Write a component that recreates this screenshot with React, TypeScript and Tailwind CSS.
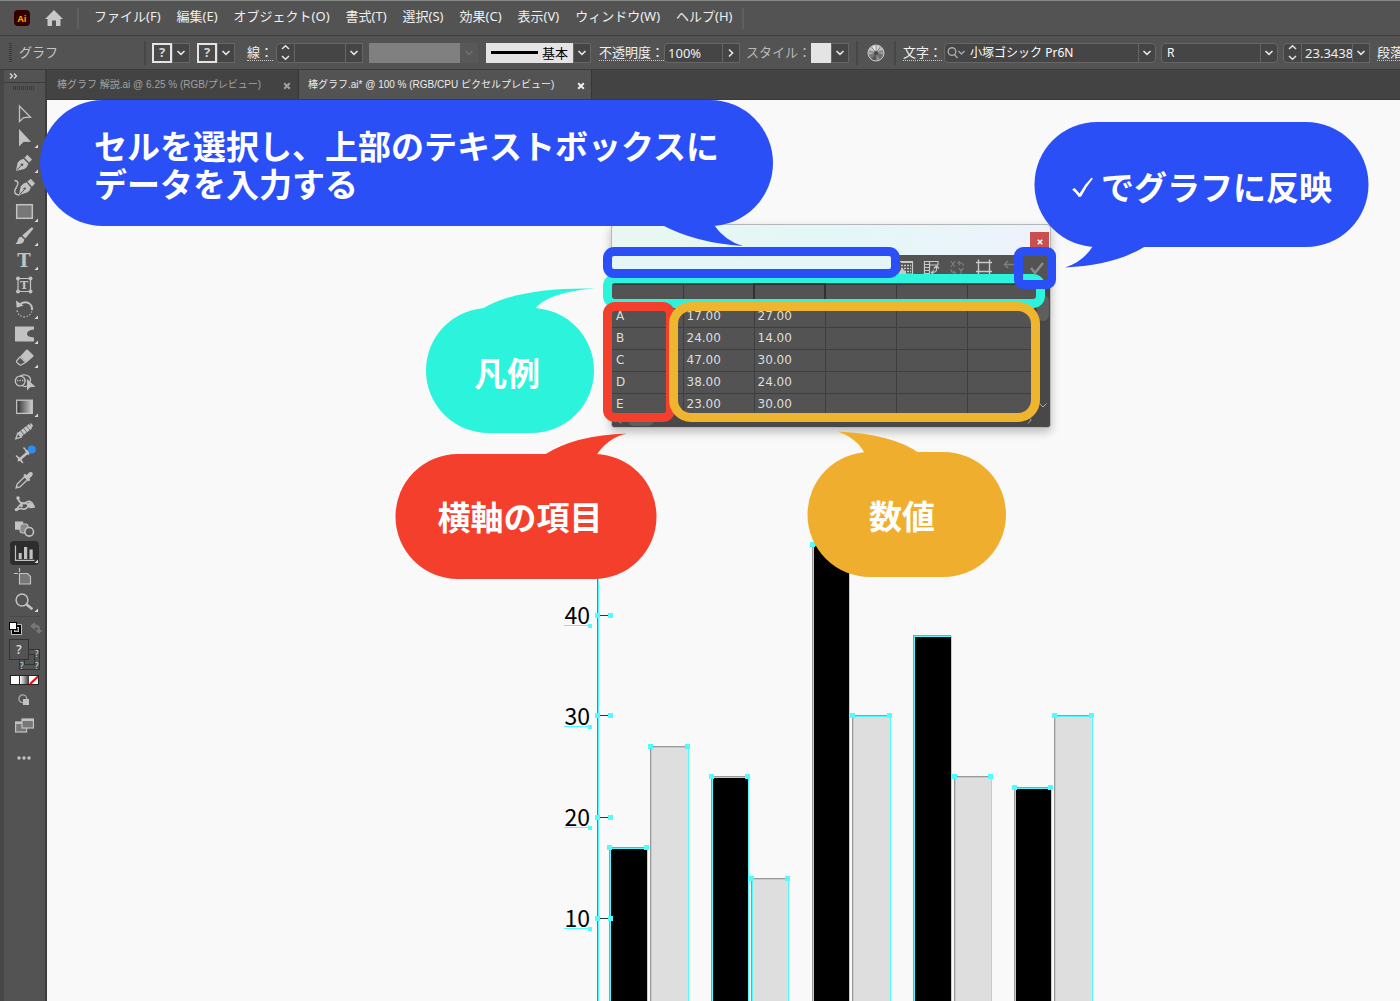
import type { ReactNode } from 'react'

const UI = "font-['Noto_Sans','Noto_Sans_CJK_JP',sans-serif]"
const JP = "font-['Noto_Sans_CJK_JP',sans-serif]"

/* ---------- small glyphs ---------- */

function Chevron({ dim = false }: { dim?: boolean }) {
  return (
    <svg width="10" height="6" viewBox="0 0 10 6" fill="none" stroke={dim ? '#6e6e6e' : '#e6e6e6'} strokeWidth="1.6">
      <path d="M1.5 1 L5 4.4 L8.5 1" />
    </svg>
  )
}

function ChevronBox({ label, dim = false }: { label: string; dim?: boolean }) {
  return (
    <button
      aria-label={label}
      className={
        dim
          ? 'flex h-5 w-[18px] items-center justify-center bg-[#585858]'
          : 'flex h-5 w-[18px] items-center justify-center border border-[#666] bg-[#454545]'
      }
    >
      <Chevron dim={dim} />
    </button>
  )
}

function Stepper({ label }: { label: string }) {
  return (
    <button
      aria-label={label}
      className="flex h-5 w-[19px] items-center justify-center rounded-l-sm border border-[#666] bg-[#454545]"
    >
      <svg width="9" height="17" viewBox="0 0 9 17" fill="none" stroke="#e6e6e6" strokeWidth="1.5">
        <path d="M1 5 L4.5 1.8 L8 5 M1 12 L4.5 15.2 L8 12" />
      </svg>
    </button>
  )
}

function PaintPicker({ label }: { label: string }) {
  return (
    <div className="flex">
      <button
        aria-label={label}
        className="flex h-5 w-5 items-center justify-center border-2 border-[#e4e4e4] bg-[#4a4a4a] font-['Noto_Sans'] text-[13px] font-bold leading-none text-[#d6d6d6]"
      >
        ?
      </button>
      <ChevronBox label={label + 'メニュー'} />
    </div>
  )
}

function Divider() {
  return <span className="h-6 w-[2px] shrink-0 bg-[#474747]" />
}

function FieldLabel({ children, htmlFor }: { children: ReactNode; htmlFor: string }) {
  return (
    <label htmlFor={htmlFor} className="whitespace-nowrap border-b border-dotted border-[#c8c8c8] leading-4 text-[#f0f0f0]">
      {children}
    </label>
  )
}

/* ---------- menu bar ---------- */

const MENUS = [
  'ファイル(F)',
  '編集(E)',
  'オブジェクト(O)',
  '書式(T)',
  '選択(S)',
  '効果(C)',
  '表示(V)',
  'ウィンドウ(W)',
  'ヘルプ(H)',
]

function MenuBar() {
  return (
    <header className="flex h-[35px] shrink-0 items-center border-b border-[#3b3b3b] bg-[#535353] pl-[14px]">
      <span className="flex h-4 w-4 items-center justify-center rounded-sm bg-[#330000] font-['Noto_Sans'] text-[9px] font-bold leading-none text-[#ff9a00]">
        Ai
      </span>
      <button aria-label="ホーム" className="ml-[14px]">
        <svg width="20" height="18" viewBox="0 0 20 18" fill="#c8c8c8">
          <path d="M10 1 L19 10 L16.5 10 L16.5 17 L12 17 L12 11.5 L8 11.5 L8 17 L3.5 17 L3.5 10 L1 10 Z" />
        </svg>
      </button>
      <span className="ml-[13px] h-[21px] w-[2px] bg-[#5f5f5f]" />
      <nav className="ml-[15px] flex gap-4 pb-1">
        {MENUS.map((m) => (
          <button key={m} className="whitespace-nowrap text-[13px] leading-5 text-[#efefef]">
            {m}
          </button>
        ))}
      </nav>
      <span className="ml-[10px] h-[21px] w-[2px] bg-[#5f5f5f]" />
    </header>
  )
}

/* ---------- control bar ---------- */

function ColorWheel() {
  const shades = ['#d8d8d8', '#b9b9b9', '#9a9a9a', '#6f6f6f', '#8b8b8b', '#555', '#7b7b7b', '#a8a8a8', '#c4c4c4', '#e2e2e2']
  return (
    <svg width="18" height="18" viewBox="-9 -9 18 18">
      {shades.map((c, i) => {
        const a = (i * Math.PI) / 5
        const b = ((i + 1) * Math.PI) / 5
        return (
          <path
            key={c}
            fill={c}
            stroke="#666"
            strokeWidth="0.5"
            d={`M0 0 L${8 * Math.sin(a)} ${-8 * Math.cos(a)} A8 8 0 0 1 ${8 * Math.sin(b)} ${-8 * Math.cos(b)} Z`}
          />
        )
      })}
      <circle r="8" fill="none" stroke="#c8c8c8" />
      <circle r="2" fill="#4a4a4a" />
    </svg>
  )
}

function ControlBar() {
  return (
    <section className="flex h-[34px] shrink-0 items-center overflow-hidden border-b border-[#3b3b3b] bg-[#535353] pl-[9px] text-[13px] text-[#e2e2e2] *:shrink-0">
      <span className="h-5 w-[3px] bg-[repeating-linear-gradient(#3a3a3a_0_1px,transparent_1px_2px)]" />
      <span className="ml-[7px] w-[125px] pb-[2px] leading-5 text-[#c6c6c6]">グラフ</span>
      <Divider />
      <div className="ml-[6px] flex gap-[7px]">
        <PaintPicker label="塗り" />
        <PaintPicker label="線の色" />
      </div>
      <div className="ml-[12px] flex items-center gap-[3px]">
        <FieldLabel htmlFor="stroke">線：</FieldLabel>
        <div className="flex">
          <Stepper label="線幅を増減" />
          <input id="stroke" className="h-5 w-[50px] border-y border-[#666] bg-[#454545] px-1" />
          <ChevronBox label="線幅" />
        </div>
      </div>
      <div className="ml-[6px] flex">
        <span className="h-5 w-[91px] bg-[#808080]" />
        <ChevronBox label="可変線幅プロファイル" dim />
      </div>
      <div className="ml-[8px] flex">
        <button className="flex h-5 w-[87px] items-center justify-between bg-[#e4e4e4] px-[5px] leading-5 text-black">
          <span className="h-[3px] w-[47px] bg-black" />
          基本
        </button>
        <ChevronBox label="ブラシ定義" />
      </div>
      <div className="ml-[8px] flex items-center">
        <FieldLabel htmlFor="opacity">不透明度：</FieldLabel>
        <input
          id="opacity"
          defaultValue="100%"
          className="h-5 w-[58px] rounded-l-sm border border-r-0 border-[#666] bg-[#454545] px-[3px] text-[#f0f0f0]"
        />
        <button aria-label="不透明度スライダー" className="flex h-5 w-[18px] items-center justify-center border border-[#666] bg-[#454545]">
          <svg width="6" height="10" viewBox="0 0 6 10" fill="none" stroke="#e6e6e6" strokeWidth="1.6">
            <path d="M1 1.5 L4.6 5 L1 8.5" />
          </svg>
        </button>
      </div>
      <div className="ml-[6px] flex items-center">
        <span className="pb-[2px] leading-5 text-[#b8b8b8]">スタイル：</span>
        <button aria-label="グラフィックスタイル" className="h-5 w-[20px] bg-[#e4e4e4]" />
        <ChevronBox label="スタイルメニュー" />
      </div>
      <div className="ml-[7px] flex items-center gap-[9px]">
        <Divider />
        <button aria-label="オブジェクトを再配色">
          <ColorWheel />
        </button>
        <Divider />
      </div>
      <div className="ml-[7px] flex items-center gap-[2px]">
        <FieldLabel htmlFor="font">文字：</FieldLabel>
        <div className="flex h-5 items-center rounded-sm border border-[#666] bg-[#454545]">
          <svg className="ml-[2px]" width="18" height="14" viewBox="0 0 18 14" fill="none" stroke="#a8a8a8" strokeWidth="1.4">
            <circle cx="5" cy="5.5" r="3.8" />
            <path d="M7.5 8.5 L10.5 12 M11.5 5 L14.5 8 L17.5 5" />
          </svg>
          <select id="font" className="ml-[5px] h-[18px] w-[168px] appearance-none bg-transparent text-[12px] leading-[18px] text-white">
            <option>小塚ゴシック Pr6N</option>
          </select>
          <span className="flex h-[18px] w-[17px] items-center justify-center border-l border-[#666]">
            <Chevron />
          </span>
        </div>
      </div>
      <div className="ml-[5px] flex h-5 items-center rounded-sm border border-[#666] bg-[#454545] pl-[5px]">
        <select aria-label="フォントスタイル" className="h-[18px] w-[93px] appearance-none bg-transparent text-[12px] leading-[18px] text-white">
          <option>R</option>
        </select>
        <span className="flex h-[18px] w-[17px] items-center justify-center border-l border-[#666]">
          <Chevron />
        </span>
      </div>
      <div className="ml-[5px] flex">
        <Stepper label="フォントサイズを増減" />
        <input
          aria-label="フォントサイズ"
          defaultValue="23.3438"
          className="h-5 w-[50px] border-y border-[#666] bg-[#454545] pl-[3px] text-[#f0f0f0]"
        />
        <ChevronBox label="フォントサイズ" />
      </div>
      <button className="ml-[7px] whitespace-nowrap border-b border-dotted border-[#c8c8c8] leading-4 text-[#f0f0f0]">段落：</button>
    </section>
  )
}

/* ---------- document tabs ---------- */

function Tab({ title, active = false }: { title: string; active?: boolean }) {
  return (
    <div
      className={
        active
          ? 'flex h-[29px] w-[293px] items-center justify-between border-r border-[#363636] bg-[#535353] pl-[9px] pr-[6px] text-[#ededed]'
          : 'flex h-[29px] w-[252px] items-center justify-between border-r border-[#363636] bg-[#434343] pl-[10px] pr-[7px] text-[#a2a2a2]'
      }
    >
      <button className="whitespace-nowrap font-['Liberation_Sans','Noto_Sans_CJK_JP',sans-serif] text-[10px] leading-4">
        {title}
      </button>
      <button aria-label="閉じる" className="pt-[2px]">
        <svg width="8" height="8" viewBox="0 0 8 8" stroke="currentColor" strokeWidth="2">
          <path d="M1.2 1.2 L6.8 6.8 M6.8 1.2 L1.2 6.8" />
        </svg>
      </button>
    </div>
  )
}

/* ---------- toolbox ---------- */

const G = '#c2c2c2'

type Tool = { name: string; more?: boolean; active?: boolean; art: ReactNode }

const TOOLS: Tool[] = [
  { name: '選択', art: <path d="M9.5 4 L9.5 19.5 L13.7 15.6 L20.5 15.2 Z" fill="none" stroke={G} strokeWidth="1.3" /> },
  { name: 'ダイレクト選択', more: true, art: <path d="M9 3 L9 20.5 L13.5 16 L21 15.7 Z" /> },
  {
    name: 'ペン',
    more: true,
    art: (
      <>
        <path d="M5.8 20 L7.7 11.5 Q10 8.5 13.5 7.8 L18.4 12.8 Q17.5 16.5 14.3 18 Z" />
        <path d="M14.5 6.7 L17.3 3.8 L22 8.4 L19.2 11.6 Z" />
        <path d="M6.5 19.3 L11.5 14.3" stroke="#535353" />
        <circle cx="12" cy="13.8" r="1.3" fill="#535353" />
      </>
    ),
  },
  {
    name: '曲線',
    art: (
      <>
        <path d="M9 20.3 L10.6 11.4 Q13 8 16.5 7.3 L20.8 12.6 Q20 16.3 17 17.6 Z" />
        <path d="M17.4 6.4 L20.8 3.8 L25 8.4 L22 11.8 Z" />
        <path d="M4.5 5.5 C9 6 8.5 9 6.3 12.5 C3.5 16.5 4.5 20 9.5 20" fill="none" stroke={G} strokeWidth="1.4" />
        <path d="M9.8 19.5 L14.2 14.8" stroke="#535353" />
        <circle cx="14.6" cy="13.6" r="1.2" fill="#535353" />
      </>
    ),
  },
  { name: '長方形', more: true, art: <rect x="6.7" y="4.7" width="15.6" height="13.6" fill="#777" stroke={G} strokeWidth="1.5" /> },
  {
    name: 'ブラシ',
    more: true,
    art: (
      <>
        <path d="M5.5 19.8 Q7.6 18.6 7.8 16 Q8.5 12.8 11.4 12.7 L14.4 15.5 Q14 19 10.5 19.8 Q8 20.4 5.5 19.8 Z" />
        <path d="M12.2 11.6 L21.3 3.6 Q23.5 2.8 23.2 5 L15.4 14.6 Z" />
      </>
    ),
  },
  {
    name: '文字',
    more: true,
    art: (
      <text x="14" y="19" textAnchor="middle" fontFamily="DejaVu Serif" fontWeight="bold" fontSize="18">
        T
      </text>
    ),
  },
  {
    name: '文字タッチ',
    art: (
      <>
        <path d="M8 5.5 H20.5 V18.5 H8 Z" fill="none" stroke={G} strokeWidth="1.2" />
        <circle cx="8" cy="5.5" r="2" />
        <circle cx="20.5" cy="5.5" r="2" />
        <circle cx="8" cy="18.5" r="2" />
        <circle cx="20.5" cy="18.5" r="2" />
        <text x="14.2" y="16.2" textAnchor="middle" fontFamily="DejaVu Serif" fontWeight="bold" fontSize="11">
          T
        </text>
      </>
    ),
  },
  {
    name: '回転',
    more: true,
    art: (
      <>
        <path d="M10 7.5 Q14 4 18.5 6 Q22.5 8.3 22 13" fill="none" stroke={G} strokeWidth="2" />
        <path d="M6 3.5 L6.7 10.8 L13.5 8.5 Z" />
        <path d="M7 13.5 Q8.5 19.5 14 20 Q19.5 19.8 21.8 14.5" fill="none" stroke={G} strokeWidth="1.3" strokeDasharray="1.3 1.9" />
      </>
    ),
  },
  { name: '線幅', more: true, art: <path d="M5 4.5 H24 V7.5 Q17 8 17 12 Q17 15 24 15.5 V19.5 H5 Z" /> },
  {
    name: '消しゴム',
    more: true,
    art: (
      <>
        <path d="M10.3 10.3 L16 4 Q17 3 18 4 L23.4 9.3 Q24 10.2 23 11 L16.5 16.6 Z" />
        <path d="M10 11 L6.6 14.8 Q6.2 15.7 7 16.4 L9.6 18.8 Q10.6 19.6 11.5 18.8 L15.6 16.4 Z" fill="none" stroke={G} strokeWidth="1.3" />
      </>
    ),
  },
  {
    name: 'シェイプ形成',
    art: (
      <>
        <circle cx="10.2" cy="11" r="4.9" fill="none" stroke={G} strokeWidth="1.3" />
        <path d="M10 6.2 Q14.5 3.5 18.8 6.3 Q21.5 9 20 12" fill="none" stroke={G} strokeWidth="1.3" />
        <path d="M12 15.5 Q15 17.3 17 16" fill="none" stroke={G} strokeWidth="1.3" />
        <path d="M7 10.5 H17" stroke={G} strokeWidth="1.3" strokeDasharray="1.3 1.2" />
        <path d="M17 9 L17 20.6 L20.2 17.2 L25.5 16.8 Z" />
      </>
    ),
  },
  {
    name: 'グラデーション',
    more: true,
    art: (
      <>
        <defs>
          <linearGradient id="toolFade">
            <stop offset="0" stopColor="#2e2e2e" />
            <stop offset="1" stopColor="#cfcfcf" />
          </linearGradient>
        </defs>
        <rect x="6.7" y="5.2" width="15.6" height="13.2" fill="url(#toolFade)" stroke={G} strokeWidth="1.3" />
      </>
    ),
  },
  {
    name: '鉛筆',
    art: (
      <>
        <path d="M9.5 15.8 L20.5 7.2" stroke={G} strokeWidth="5.4" strokeDasharray="3.2 0.6" />
        <path d="M20 4.2 Q23 4.5 22.8 7.5 L20.5 9 Z" />
        <path d="M5.8 19.8 L7.8 14.2 L11.2 18.2 Z" fill="none" stroke={G} strokeWidth="1.3" />
      </>
    ),
  },
  {
    name: '寸法',
    art: (
      <>
        <path d="M9 17 L20 7.5" stroke={G} strokeWidth="2.4" />
        <path d="M6 12.5 L13 20 M13.5 4.5 L17.5 9" stroke={G} strokeWidth="1.4" />
        <path d="M7.5 18.5 L8.5 13.5 L12.6 17.4 Z M18.5 12.5 L15 8 L21 6.5 Z" />
        <circle cx="21.8" cy="6.5" r="4" fill="#2f8df0" />
      </>
    ),
  },
  {
    name: 'スポイト',
    art: (
      <>
        <path d="M6.2 19.8 L7.2 16 L14.5 8.8 L17.6 11.6 L10 18.9 Z" fill="none" stroke={G} strokeWidth="1.4" />
        <path d="M13.3 7.2 L15 5.8 L16.5 7 L19.5 4.3 Q22 3.5 22.6 5 Q23.3 6.6 21.8 8.2 L19.4 10.6 L20.3 12 L18.6 13.5 Z" />
      </>
    ),
  },
  {
    name: 'パペットワープ',
    art: (
      <>
        <path d="M8 6.5 Q9.5 12 14.5 11.5 Q19 7.5 22 11 Q23.5 14 24.5 15.5" fill="none" stroke={G} strokeWidth="1.8" />
        <path d="M6.6 17.5 Q9.5 12.5 13 11 Q18.5 11.5 18 14.5 Q15.5 18.5 11 16.5 Z" fill="none" stroke={G} strokeWidth="1.6" />
        <path d="M17 14.5 Q20 17.5 24.5 15.5 L21 11 Q18.5 9.5 17 12 Z" />
        <circle cx="8" cy="6" r="1.8" />
        <circle cx="6.4" cy="17.6" r="1.7" />
        <circle cx="11.5" cy="14" r="1.4" />
      </>
    ),
  },
  {
    name: 'ブレンド',
    art: (
      <>
        <rect x="5" y="4.5" width="8.2" height="8.2" />
        <rect x="10" y="7" width="8" height="9" rx="2.5" fill="#8a8a8a" stroke={G} strokeWidth="1.1" />
        <circle cx="19.2" cy="14.8" r="4.3" fill="#535353" stroke={G} strokeWidth="1.6" />
      </>
    ),
  },
  {
    name: '棒グラフ',
    more: true,
    active: true,
    art: (
      <>
        <path d="M5.5 4.5 V19.3 H24.5" fill="none" stroke={G} strokeWidth="1.2" />
        <path d="M8.7 12 h3 v6 h-3 Z M14 6 h3.2 v12 h-3.2 Z M19.5 8.5 h3.2 v9.5 h-3.2 Z" />
      </>
    ),
  },
  {
    name: 'アートボード',
    art: (
      <>
        <path d="M9.5 8.5 H17.5 L20.5 11.5 V19 H9.5 Z" fill="#777" stroke={G} strokeWidth="1.2" />
        <path d="M4 8.5 H8 M9.5 3 V7 M11 8.5 H13" stroke={G} strokeWidth="1.2" />
      </>
    ),
  },
  {
    name: 'ズーム',
    more: true,
    art: (
      <>
        <circle cx="12" cy="10" r="5.9" fill="none" stroke={G} strokeWidth="1.5" />
        <path d="M16.3 14.2 L22.4 19.2" stroke={G} strokeWidth="2.6" />
      </>
    ),
  },
]

function Toolbox() {
  return (
    <aside className="flex w-[47px] shrink-0 flex-col border-l-4 border-r-2 border-[#3d3d3d] border-l-[#474747] bg-[#535353]">
      <button aria-label="パネルを展開" className="flex h-[13px] items-center border-b border-[#3b3b3b] pl-[5px]">
        <svg width="9" height="6" viewBox="0 0 9 6" fill="none" stroke="#d8d8d8" strokeWidth="1.3">
          <path d="M1 0.5 L3.5 3 L1 5.5 M5 0.5 L7.5 3 L5 5.5" />
        </svg>
      </button>
      <span className="ml-[9px] mt-[3px] h-1 w-[22px] bg-[repeating-linear-gradient(90deg,#3a3a3a_0_1px,transparent_1px_2px)]" />
      <div className="mt-[12px] flex h-[512px] flex-col items-start justify-between pl-[6px]">
        {TOOLS.map((t) => (
          <button key={t.name} aria-label={t.name} className={t.active ? 'h-6 rounded-sm bg-[#2d2d2d]' : 'h-6 rounded-sm'}>
            <svg width="29" height="24" viewBox="0 0 29 24" fill={G}>
              {t.art}
              {t.more && <path d="M28 18.5 V22 H24.5 Z" fill="#dcdcdc" />}
            </svg>
          </button>
        ))}
      </div>
      <div className="ml-[5px] mt-[2px] w-[31px] border-t border-[#484848]" />
      <div className="ml-[4px] mt-[4px] flex justify-between pr-[2px]">
        <button aria-label="初期設定の塗りと線">
          <svg width="14" height="14" viewBox="0 0 14 14">
            <path d="M5 5 H12 V12 H5 Z" fill="none" stroke="#ddd" strokeWidth="3.6" />
            <path d="M5 5 H12 V12 H5 Z" fill="none" stroke="#000" strokeWidth="2" />
            <rect x="1.5" y="1.5" width="7" height="7" fill="#fff" stroke="#000" />
          </svg>
        </button>
        <button aria-label="塗りと線を入れ替え">
          <svg width="14" height="14" viewBox="0 0 14 14" fill="#777">
            <path d="M1 5 L6 1 V3.5 Q11.5 3.5 11 9 H13.5 L10 13 L6.5 9 H9 Q9 6 6 6.3 V9 Z" />
          </svg>
        </button>
      </div>
      <button aria-label="塗りと線" className="ml-[5px] mt-[4px] w-[31px]">
        <svg width="31" height="32" viewBox="0 0 31 32" fontFamily="Noto Sans" fill="#cfe3ee">
          <rect x="10.5" y="10.5" width="20" height="20" fill="#535353" stroke="#333" />
          <rect x="15.5" y="15.5" width="10" height="10" fill="#535353" stroke="#333" />
          <text x="26" y="18" fontSize="8">
            ?
          </text>
          <text x="11" y="30" fontSize="8">
            ?
          </text>
          <text x="26" y="30" fontSize="8">
            ?
          </text>
          <rect x="0.5" y="0.5" width="19" height="20" fill="#535353" stroke="#333" />
          <text x="10" y="15" fontSize="12" fontWeight="500" textAnchor="middle" fill="#e6e6e6">
            ?
          </text>
        </svg>
      </button>
      <button aria-label="カラーモード" className="ml-[6px] mt-[4px] w-[29px]">
        <svg width="29" height="10" viewBox="0 0 29 10">
          <defs>
            <linearGradient id="modeFade">
              <stop offset="0" stopColor="#fff" />
              <stop offset="1" stopColor="#333" />
            </linearGradient>
          </defs>
          <rect width="29" height="10" fill="#222" />
          <rect x="1" y="1" width="8" height="8" fill="#fff" />
          <rect x="10" y="1" width="9" height="8" fill="url(#modeFade)" />
          <rect x="19" y="1" width="9" height="8" fill="#fff" />
          <path d="M20 9 L28 1.5" stroke="#f00" strokeWidth="2" />
        </svg>
      </button>
      <button aria-label="描画モード" className="ml-[14px] mt-[9px] w-[12px]">
        <svg width="12" height="12" viewBox="0 0 12 12">
          <circle cx="4.8" cy="4.8" r="3.9" fill="none" stroke="#aaa" strokeWidth="1.3" />
          <rect x="5" y="5" width="6" height="6" fill="#c2c2c2" />
        </svg>
      </button>
      <button aria-label="スクリーンモード" className="ml-[11px] mt-[12px] w-[19px]">
        <svg width="19" height="15" viewBox="0 0 19 15" fill="#777" stroke="#c2c2c2" strokeWidth="1.2">
          <rect x="0.6" y="4" width="11" height="10" />
          <path d="M1 5 H11" strokeWidth="2" />
          <rect x="7" y="1" width="11.4" height="9" />
          <path d="M7 2 H18" strokeWidth="2" />
        </svg>
      </button>
      <button aria-label="ツールバーを編集" className="ml-[12px] mt-[23px] w-[16px]">
        <svg width="16" height="4" viewBox="0 0 16 4" fill="#c2c2c2">
          <circle cx="3" cy="2" r="1.7" />
          <circle cx="8" cy="2" r="1.7" />
          <circle cx="13" cy="2" r="1.7" />
        </svg>
      </button>
    </aside>
  )
}

/* ---------- bar chart on the artboard ---------- */

const CYAN = '#4ffcff'
const BARS = [
  { x: 563, y: 748, w: 37, dark: true },
  { x: 604, y: 647, w: 37 },
  { x: 665, y: 677, w: 36, dark: true },
  { x: 705, y: 779, w: 36 },
  { x: 766, y: 445, w: 36, dark: true },
  { x: 806, y: 616, w: 37 },
  { x: 867, y: 536, w: 37, dark: true, bare: true },
  { x: 908, y: 677, w: 36 },
  { x: 968, y: 688, w: 36, dark: true },
  { x: 1008, y: 616, w: 37 },
]
const TICKS = [
  { v: '40', y: 515, base: 524 },
  { v: '30', y: 615, base: 625 },
  { v: '20', y: 717, base: 726 },
  { v: '10', y: 818, base: 827 },
]

function Chart() {
  return (
    <svg className="absolute inset-0 h-full w-full" shapeRendering="crispEdges">
      <rect x="550" y="460" width="1" height="441" fill="#777" />
      <rect x="551" y="460" width="1" height="441" fill={CYAN} />
      {BARS.map((b) => (
        <g key={b.x}>
          <rect x={b.x - 1} y={b.y - 1} width={b.w + 1} height="900" fill="#999" />
          <rect x={b.x} y={b.y} width={b.w} height="900" fill={b.dark ? '#000' : '#dedede'} />
          <rect x={b.x} y={b.y} width={b.w} height="1" fill={CYAN} />
          <rect x={b.x} y={b.y} width="1" height="900" fill={CYAN} />
          <rect x={b.x + b.w} y={b.y} width="1" height="900" fill={CYAN} />
          {!b.bare && (
            <>
              <rect x={b.x - 3} y={b.y - 3} width="5" height="5" fill={CYAN} />
              <rect x={b.x + b.w - 3} y={b.y - 3} width="5" height="5" fill={CYAN} />
            </>
          )}
        </g>
      ))}
      {TICKS.map((t) => (
        <g key={t.v}>
          <rect x="550" y={t.y} width="14" height="1" fill="#333" />
          <rect x="548" y={t.y - 2} width="5" height="5" fill={CYAN} />
          <rect x="561" y={t.y - 2} width="5" height="5" fill={CYAN} />
          <text x="543" y={t.base} textAnchor="end" fontFamily="Noto Sans CJK JP" fontSize="23">
            {t.v}
          </text>
          <rect x="517" y={t.base + 1} width="28" height="1" fill={CYAN} />
          <rect x="541" y={t.base} width="4" height="4" fill={CYAN} />
        </g>
      ))}
    </svg>
  )
}

/* ---------- graph data window ---------- */

const ROWS = [
  ['A', '17.00', '27.00'],
  ['B', '24.00', '14.00'],
  ['C', '47.00', '30.00'],
  ['D', '38.00', '24.00'],
  ['E', '23.00', '30.00'],
]

function DataWindow() {
  return (
    <div className="absolute left-[564px] top-[124px] flex w-[440px] flex-col overflow-hidden rounded-sm border border-[#b4b8b8] bg-[#535353] shadow-[0_4px_10px_rgba(0,0,0,0.25)]">
      <div className="flex h-[30px] items-end justify-end bg-linear-to-r from-[#e9f7f0] via-[#e3f7f8] to-[#eff2fb] pr-[1px]">
        <button aria-label="閉じる" className="flex h-[23px] w-[19px] items-center justify-center bg-[#c94f50] pb-1 text-white">
          <svg width="6" height="6" viewBox="0 0 6 6" stroke="currentColor" strokeWidth="1.5">
            <path d="M0.8 0.8 L5.2 5.2 M5.2 0.8 L0.8 5.2" />
          </svg>
        </button>
      </div>
      <div className="flex h-[28px] items-start">
        <input aria-label="セルの値" className="h-[18px] w-[282px] bg-[#e4f7f6] px-1 text-[12px] text-black" />
        <svg className="ml-[3px]" width="150" height="24" viewBox="0 0 150 24" fill="none" stroke="#c8c8c8" strokeWidth="1.2">
          <path d="M3 6.5 H15.5 V19 H6" />
          <path d="M4 7 H15" strokeWidth="2" />
          <path d="M4 10.5 H14 M4 13.5 H14 M7 16.5 H14" strokeWidth="1.6" strokeDasharray="2 1" />
          <path d="M1 19 L5 13 L9 17 V19 Z" fill="#c8c8c8" stroke="none" />
          <path d="M27.5 6.5 H32.5 V18.5 H27.5 Z M32.5 6.5 H41 V10 H32.5" />
          <path d="M28 9.5 H32 M28 12.5 H32 M28 15.5 H32" />
          <path d="M39.5 11.5 V15 Q39 17.5 35 17.5 M36.8 13.5 L39.5 10.8 L42 13.5 M37 15.2 L34.5 17.5 L37 20" />
          <g stroke="#7c7c7c">
            <path d="M54 6 L58 12 M58 6 L54 12 M62 13 L64 16 L66.5 13 M64 16 V19 M54 14 Q54 18 58 18 M61 8 Q66 7 66.5 11" />
            <path d="M56.5 16 L58.5 18 L56.5 20 M63 6 L61 8 L63 10" />
          </g>
          <path d="M81.5 4.5 V19 M92.5 4.5 V19 M79 7.5 H95 M79 16.5 H95" strokeWidth="1.4" />
          <path d="M117 9.5 H108 M111 6 L107.5 9.5 L111 13" stroke="#7c7c7c" strokeWidth="1.6" />
          <path d="M134 13 L138 18 L146 8" stroke="#8a8a8a" strokeWidth="2.6" />
        </svg>
      </div>
      <div className="flex h-[130px] overflow-hidden">
        <table className="w-[424px] shrink-0 table-fixed border-collapse self-start font-['DejaVu_Sans'] text-[12px] leading-4 text-[#dedede]">
          <thead>
            <tr className="h-[21px] border-y border-[#3a3a3a]">
              <th className="w-[71px] border-r border-[#3a3a3a]" />
              <th className="w-[71px]" />
              <th className="w-[71px] border-2 border-[#303030]" />
              <th className="w-[71px] border-r border-[#3a3a3a]" />
              <th className="w-[71px] border-r border-[#3a3a3a]" />
              <th />
            </tr>
          </thead>
          <tbody>
            {ROWS.map((r) => (
              <tr key={r[0]} className="h-[22px] border-b border-[#3e3e3e]">
                {[0, 1, 2, 3, 4, 5].map((c) => (
                  <td key={c} className={c === 0 ? 'border-r border-[#3e3e3e] pl-1' : 'border-r border-[#3e3e3e] pl-[3px]'}>
                    {r[c] ?? ''}
                  </td>
                ))}
              </tr>
            ))}
          </tbody>
        </table>
        <div className="flex flex-1 flex-col items-center justify-between bg-[#484848] pb-[5px] pt-[12px]">
          <span className="h-[26px] w-[12px] rounded-full bg-[#5e5e5e]" />
          <svg width="8" height="5" viewBox="0 0 8 5" fill="none" stroke="#b0b0b0">
            <path d="M0.5 0.5 L4 4 L7.5 0.5" />
          </svg>
        </div>
      </div>
      <div className="flex h-[14px] items-center justify-between bg-[#484848] pl-[5px] pr-[18px]">
        <div className="flex items-center gap-[6px]">
          <svg width="5" height="8" viewBox="0 0 5 8" fill="none" stroke="#b0b0b0">
            <path d="M4 0.5 L0.8 4 L4 7.5" />
          </svg>
          <span className="h-[12px] w-[26px] rounded-full bg-[#5e5e5e]" />
        </div>
        <svg width="5" height="8" viewBox="0 0 5 8" fill="none" stroke="#b0b0b0">
          <path d="M1 0.5 L4.2 4 L1 7.5" />
        </svg>
      </div>
    </div>
  )
}

/* ---------- callouts ---------- */

function Annotations() {
  const text = 'absolute flex items-center justify-center whitespace-nowrap font-bold text-white'
  return (
    <div className={JP}>
      <span className="absolute left-[556px] top-[174px] h-[34px] w-[442px] rounded-[12px] border-[9px] border-[#2bf3dc]" />
      <span className="absolute left-[556px] top-[147px] h-[31px] w-[297px] rounded-[11px] border-[9px] border-[#2b4ff6]" />
      <span className="absolute left-[967px] top-[147px] h-[42px] w-[42px] rounded-[9px] border-[9px] border-[#2b4ff6]" />
      <span className="absolute left-[556px] top-[202px] h-[120px] w-[72px] rounded-[12px] border-[9px] border-[#f43f2c]" />
      <span className="absolute left-[622px] top-[202px] h-[120px] w-[371px] rounded-[22px] border-[9px] border-[#f0b52e]" />

      <svg className="absolute left-[-7px] top-0 h-[147px] w-[733px]" viewBox="0 0 733 147" fill="#2b4ff6">
        <rect y="0" width="733" height="126" rx="63" />
        <path d="M622 125 Q656 143 703 146 Q685 141 674 125 Z" />
      </svg>
      <p className={text + ' left-[47px] top-[26px] h-[76px] text-[33px] leading-[38px]'}>
        セルを選択し、上部のテキストボックスに
        <br />
        データを入力する
      </p>

      <svg className="absolute left-[987px] top-[22px] h-[147px] w-[335px]" viewBox="0 0 335 147" fill="#2b4ff6">
        <rect x="0.5" width="334" height="125" rx="62.5" />
        <path d="M59 124 Q49 140 31 145.5 Q82 143 112 124 Z" />
      </svg>
      <p className={text + ' left-[987px] top-[67px] h-[38px] w-[335px] text-[33px] leading-[38px]'}>
        <svg className="mr-[7px] mt-[2px]" width="23" height="21" viewBox="0 0 23 21" fill="#fff">
          <path d="M1 12.6 L3.6 11 L8.6 16.6 Q13.5 7.5 20.4 0.8 L22 1.4 Q15 9.5 10.2 19.6 L7.8 20 Q5 15.8 1 12.6 Z" />
        </svg>
        でグラフに反映
      </p>

      <svg className="absolute left-[379px] top-[188px] h-[146px] w-[170px]" viewBox="0 0 170 146" fill="#2bf3dc">
        <rect y="20" width="168" height="125" rx="62.5" />
        <path d="M56 21 Q92 -1 169 0.5 Q121 4 108 22 Z" />
      </svg>
      <p className={text + ' left-[379px] top-[253px] h-[38px] w-[162px] text-[33px] leading-[38px]'}>凡例</p>

      <svg className="absolute left-[348px] top-[333px] h-[147px] w-[262px]" viewBox="0 0 262 147" fill="#f43f2c">
        <rect x="0.5" y="21" width="261" height="125" rx="62.5" />
        <path d="M149 22 Q180 2 232 0.5 Q212 5 201 23 Z" />
      </svg>
      <p className={text + ' left-[348px] top-[397px] h-[38px] w-[250px] text-[33px] leading-[38px]'}>横軸の項目</p>

      <svg className="absolute left-[760px] top-[331px] h-[147px] w-[200px]" viewBox="0 0 200 147" fill="#f0ae2e">
        <rect x="0.5" y="21" width="198.5" height="125" rx="62.5" />
        <path d="M31 0.5 Q85 3 112 22 L58 23 Q51 8 31 0.5 Z" />
      </svg>
      <p className={text + ' left-[760px] top-[396px] h-[38px] w-[190px] text-[33px] leading-[38px]'}>数値</p>
    </div>
  )
}

export default function App() {
  return (
    <div className={'flex h-screen flex-col overflow-hidden border-t border-[#868886] bg-[#434343] ' + UI}>
      <MenuBar />
      <ControlBar />
      <div className="flex min-h-0 flex-1">
        <Toolbox />
        <div className="flex min-w-0 flex-1 flex-col">
          <div className="flex h-[30px] shrink-0 border-b border-[#3b3b3b]">
            <Tab title="棒グラフ 解説.ai @ 6.25 % (RGB/プレビュー)" />
            <Tab title="棒グラフ.ai* @ 100 % (RGB/CPU ピクセルプレビュー)" active />
          </div>
          <main className="relative flex-1 bg-[#f9f9f9]">
            <Chart />
            <DataWindow />
            <Annotations />
          </main>
        </div>
      </div>
    </div>
  )
}
